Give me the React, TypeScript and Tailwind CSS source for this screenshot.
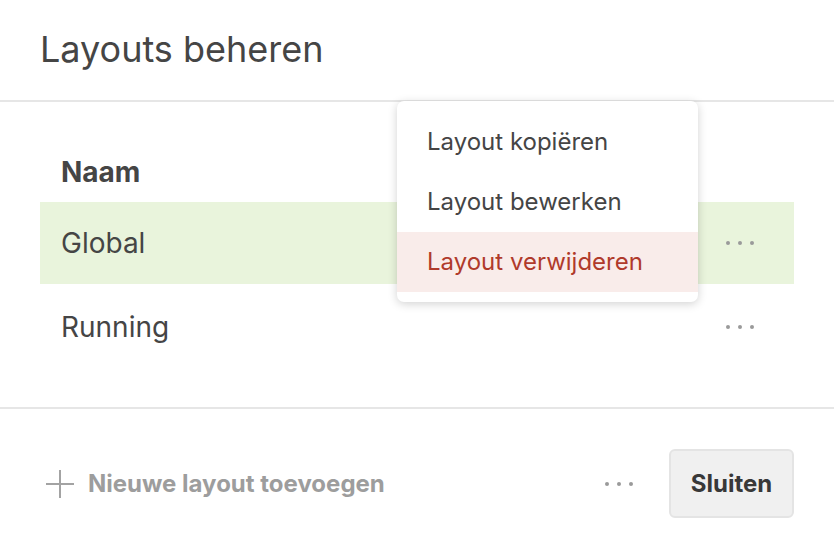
import React from "react";

function Dots({ className = "" }: { className?: string }) {
  return (
    <div className={"flex items-center gap-[8px] " + className}>
      <span className="block w-[4px] h-[4px] rounded-full bg-[#9a9a9a]" />
      <span className="block w-[4px] h-[4px] rounded-full bg-[#9a9a9a]" />
      <span className="block w-[4px] h-[4px] rounded-full bg-[#9a9a9a]" />
    </div>
  );
}

export default function App() {
  return (
    <div
      className="relative w-[834px] h-[559px] bg-white text-[#454545] overflow-hidden"
      style={{ fontFamily: "Inter, 'Noto Sans', sans-serif" }}
    >
      <div className="h-[100px] flex items-center px-[40px]">
        <h1 className="text-[36px] leading-none font-normal pb-[2px]">Layouts beheren</h1>
      </div>
      <div className="h-[2px] bg-[#e6e6e6]" />
      <div className="px-[40px] pt-[40px] h-[305px]">
        <div className="h-[60px] flex items-center px-[21px] text-[28px] font-bold leading-none">
          Naam
        </div>
        <div className="h-[82px] bg-[#e9f4dc] flex items-center justify-between pl-[21px] pr-[40px] text-[28px] leading-none">
          <span>Global</span>
          <Dots />
        </div>
        <div className="h-[86px] flex items-center justify-between pl-[21px] pr-[40px] text-[28px] leading-none">
          <span>Running</span>
          <Dots />
        </div>
      </div>
      <div className="h-[2px] bg-[#e6e6e6]" />
      <div className="flex items-center justify-between pl-[46px] pr-[40px] pt-[40px]">
        <div className="flex items-center gap-[14px] text-[#9d9d9d]">
          <svg width="28" height="28" viewBox="0 0 28 28" className="block">
            <path d="M14 0V28M0 14H28" stroke="#a3a3a3" strokeWidth="2" fill="none" />
          </svg>
          <span className="text-[24px] font-bold leading-none">Nieuwe layout toevoegen</span>
        </div>
        <div className="flex items-center gap-[36px]">
          <Dots />
          <button className="w-[125px] h-[69px] rounded-[6px] bg-[#f0f0f0] border-2 border-[#e4e4e4] text-[24px] font-bold text-[#383838] leading-none">
            Sluiten
          </button>
        </div>
      </div>

      <div className="absolute left-[397px] top-[101px] w-[301px] rounded-[7px] bg-white shadow-[0_2px_10px_rgba(0,0,0,0.18)] pt-[11px] pb-[10px] text-[24px] leading-none">
        <div className="h-[60px] flex items-center px-[30px]">Layout kopiëren</div>
        <div className="h-[60px] flex items-center px-[30px]">Layout bewerken</div>
        <div className="h-[60px] flex items-center px-[30px] bg-[#f9ecea] text-[#b03a2b]">
          Layout verwijderen
        </div>
      </div>
    </div>
  );
}
